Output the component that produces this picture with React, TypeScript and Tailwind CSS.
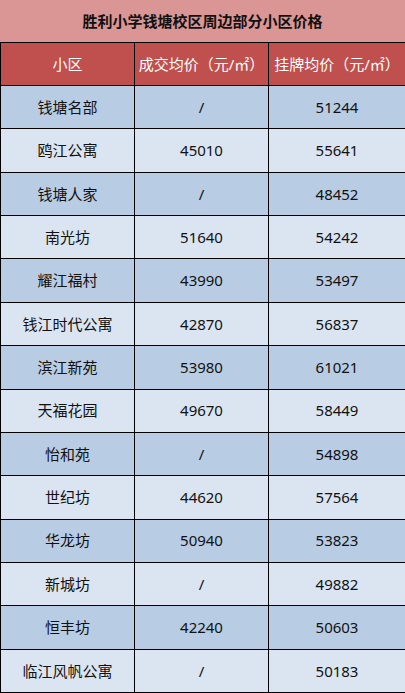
const rows: [string, string, string][] = [
  ["钱塘名部", "/", "51244"],
  ["鸥江公寓", "45010", "55641"],
  ["钱塘人家", "/", "48452"],
  ["南光坊", "51640", "54242"],
  ["耀江福村", "43990", "53497"],
  ["钱江时代公寓", "42870", "56837"],
  ["滨江新苑", "53980", "61021"],
  ["天福花园", "49670", "58449"],
  ["怡和苑", "/", "54898"],
  ["世纪坊", "44620", "57564"],
  ["华龙坊", "50940", "53823"],
  ["新城坊", "/", "49882"],
  ["恒丰坊", "42240", "50603"],
  ["临江风帆公寓", "/", "50183"],
];

export default function App() {
  return (
    <div
      className="w-[405px] h-[693px] grid grid-cols-[135px_134px_136px] grid-rows-[43px_43px_repeat(14,1fr)] bg-white text-[15px] text-[#111]"
      style={{ fontFamily: '"Noto Sans", "Noto Sans CJK SC", sans-serif' }}
    >
      {/* title */}
      <div className="col-span-3 flex items-center justify-center bg-[#da9694] border-b border-black font-bold text-[15px]">
        胜利小学钱塘校区周边部分小区价格
      </div>

      {/* header */}
      <div className="flex items-center justify-center bg-[#c0504d] text-white border-l border-r border-b border-black">
        小区
      </div>
      <div className="flex items-center justify-center bg-[#c0504d] text-white border-r border-b border-black whitespace-nowrap">
        成交均价（元/㎡）
      </div>
      <div className="flex items-center justify-center bg-[#c0504d] text-white border-b border-black whitespace-nowrap">
        挂牌均价（元/㎡）
      </div>

      {rows.map((r, i) => {
        const bg = i % 2 === 0 ? "bg-[#b8cce4]" : "bg-[#dbe5f1]";
        return [
          <div key={i + "a"} className={`${bg} flex items-center justify-center border-l border-r border-b border-black`}>
            {r[0]}
          </div>,
          <div key={i + "b"} className={`${bg} flex items-center justify-center border-r border-b border-black`}>
            {r[1]}
          </div>,
          <div key={i + "c"} className={`${bg} flex items-center justify-center border-b border-black`}>
            {r[2]}
          </div>,
        ];
      })}
    </div>
  );
}
